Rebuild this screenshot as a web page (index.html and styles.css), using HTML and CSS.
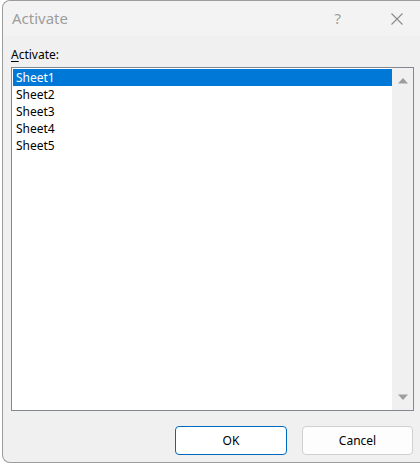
FILE: index.html
```html
<!DOCTYPE html>
<html>
<head>
<meta charset="utf-8">
<title>Activate</title>
<link rel="stylesheet" href="styles.css">
</head>
<body>
<div class="dialog">
  <div class="titlebar">
    <span class="title">Activate</span>
    <span class="help">?</span>
    <svg class="close" width="12" height="12" viewBox="0 0 12 12">
      <path d="M0.5 0.5 L11.5 11.5 M11.5 0.5 L0.5 11.5" stroke="#8a8a8a" stroke-width="1.1" fill="none"/>
    </svg>
  </div>
  <div class="content">
    <div class="label"><span class="ul">A</span>ctivate:</div>
    <div class="listbox">
      <div class="items">
        <div class="item selected">Sheet1</div>
        <div class="item">Sheet2</div>
        <div class="item">Sheet3</div>
        <div class="item">Sheet4</div>
        <div class="item">Sheet5</div>
      </div>
      <div class="scrollbar">
        <svg width="10" height="6" viewBox="0 0 10 6"><path d="M5 0 L10 5.5 L0 5.5 Z" fill="#9e9e9e"/></svg>
        <svg width="10" height="6" viewBox="0 0 10 6"><path d="M0 0.5 L10 0.5 L5 6 Z" fill="#9e9e9e"/></svg>
      </div>
    </div>
    <div class="buttons">
      <button class="btn primary">OK</button>
      <button class="btn">Cancel</button>
    </div>
  </div>
</div>
</body>
</html>
```
FILE: styles.css
```css
html, body {
  margin: 0;
  padding: 0;
  background: #ffffff;
  width: 420px;
  height: 466px;
  overflow: hidden;
}

.dialog {
  margin-left: 2px;
  width: 417px;
  border: 1px solid #9c9c9c;
  border-right: none;
  border-radius: 8px 0 0 8px;
  background: #f0f0f0;
  font-family: "Noto Sans", "Open Sans", sans-serif;
  font-size: 12px;
  color: #000;
}

.titlebar {
  height: 35px;
  display: flex;
  align-items: center;
  background: #f3f3f3;
  border-radius: 8px 0 0 0;
  padding-left: 9px;
}

.title {
  font-size: 15px;
  color: #9d9d9d;
  flex: 1;
  margin-top: -1px;
}

.help {
  font-size: 15px;
  color: #9d9d9d;
  margin-right: 50px;
  margin-top: -1px;
}

.close {
  margin-right: 17px;
}

.content {
  padding: 11px 8px 7px 8px;
}

.label {
  line-height: 16px;
  height: 16px;
  color: #000;
}

.ul {
  text-decoration: underline;
  text-underline-offset: 2px;
}

.listbox {
  margin-top: 4px;
  width: 403px;
  height: 344px;
  box-sizing: border-box;
  border: 1px solid #828790;
  background: #ffffff;
  display: flex;
}

.items {
  flex: 1;
  padding: 1px 0 0 1px;
}

.item {
  height: 17px;
  line-height: 17px;
  padding-left: 3px;
}

.item.selected {
  background: #0078d7;
  color: #ffffff;
}

.scrollbar {
  width: 21px;
  background: #f0f0f0;
  display: flex;
  flex-direction: column;
  justify-content: space-between;
  align-items: center;
  padding: 10px 0 10px 0;
  box-sizing: border-box;
}

.scrollbar svg {
  display: block;
}

.buttons {
  margin-top: 15px;
  margin-right: -1px;
  display: flex;
  justify-content: flex-end;
  gap: 15px;
}

.btn {
  font-family: "Noto Sans", "Open Sans", sans-serif;
  font-size: 12px;
  color: #000;
  height: 29px;
  width: 111px;
  border: 1px solid #d0d0d0;
  border-radius: 4px;
  background: #fdfdfd;
  padding: 0;
}

.btn.primary {
  width: 112px;
  border-color: #0067c0;
  background: #ffffff;
}
```
